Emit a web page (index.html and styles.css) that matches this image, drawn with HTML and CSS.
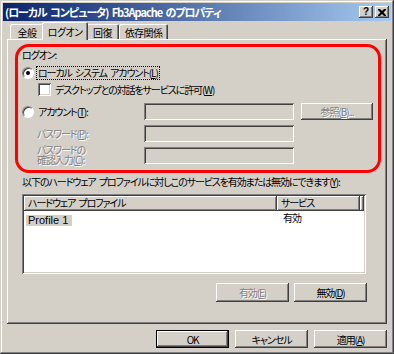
FILE: index.html
```html
<!DOCTYPE html>
<html lang="ja">
<head>
<meta charset="utf-8">
<title>プロパティ</title>
<link rel="stylesheet" href="styles.css">
</head>
<body>
<div class="window">
  <div class="titlebar">
    <span class="title">(ローカル コンピュータ) Fb3Apache のプロパティ</span>
    <div class="caption-btns">
      <span class="cbtn help">?</span>
      <span class="cbtn close"><svg width="8" height="7" viewBox="0 0 8 7"><path d="M0 0h2l2 2 2-2h2v1l-2.5 2.5 2.5 2.5v1h-2l-2-2-2 2h-2v-1l2.5-2.5-2.5-2.5z" fill="#000"/></svg></span>
    </div>
  </div>
  <div class="tabs">
    <div class="tab t1">全般</div>
    <div class="tab t2 sel">ログオン</div>
    <div class="tab t3">回復</div>
    <div class="tab t4">依存関係</div>
  </div>
  <div class="panel">
    <div class="annot"></div>
    <div class="lbl">ログオン:</div>
    <div class="opt-row r1"><span class="radio checked"></span><span class="focus">ローカル システム アカウント(<u>L</u>)</span></div>
    <div class="opt-row c1"><span class="check"></span><span class="otext">デスクトップとの対話をサービスに許可(<u>W</u>)</span></div>
    <div class="acct">
      <div class="opt-row"><span class="radio"></span><span class="otext">アカウント(<u>T</u>):</span></div>
      <div class="edit"></div>
      <div class="btn disabled">参照(<u>B</u>)...</div>
      <div class="dlabel">パスワード(<u>P</u>):</div>
      <div class="edit"></div>
      <div></div>
      <div class="dlabel two">パスワードの<br>確認入力(<u>C</u>):</div>
      <div class="edit"></div>
    </div>
    <div class="lbl hw">以下のハードウェア プロファイルに対しこのサービスを有効または無効にできます(<u>Y</u>):</div>
    <div class="listview">
      <div class="lv-head">
        <div class="hcell col1">ハードウェア プロファイル</div>
        <div class="hcell col2">サービス</div>
        <div class="hcell col3"></div>
      </div>
      <div class="lv-row">
        <div class="col1"><span class="selitem">Profile 1</span></div>
        <div class="col2 val">有効</div>
      </div>
    </div>
    <div class="btn-row">
      <div class="btn disabled">有効(<u>E</u>)</div>
      <div class="btn">無効(<u>D</u>)</div>
    </div>
  </div>
  <div class="dlg-btns">
    <div class="btn default">OK</div>
    <div class="btn">キャンセル</div>
    <div class="btn">適用(<u>A</u>)</div>
  </div>
</div>
</body>
</html>
```
FILE: styles.css
```css
* { box-sizing: border-box; }
html, body { margin: 0; padding: 0; background: #d4d0c8; }
body {
  font-family: "Noto Sans CJK JP", "Noto Sans", sans-serif;
  font-size: 10px;
  color: #000;
  font-feature-settings: "palt";
  letter-spacing: -1.1px;
  word-spacing: 2px;
}
u { text-decoration: underline; text-underline-offset: 1px; }

.window {
  width: 394px;
  height: 354px;
  padding: 3px;
  background: #d4d0c8;
  box-shadow: inset -1px -1px #404040, inset 1px 1px #d4d0c8, inset -2px -2px #808080, inset 2px 2px #fff;
  display: flex;
  flex-direction: column;
}

.titlebar {
  height: 18px;
  background: linear-gradient(to right, #0a246a, #a6caf0);
  display: flex;
  align-items: center;
  justify-content: space-between;
  padding: 0 2px 0 2px;
}
.title {
  color: #fff;
  font-weight: bold;
  font-size: 11px;
  letter-spacing: -1.05px;
  word-spacing: 2px;
  line-height: 18px;
}
.caption-btns { display: flex; gap: 2px; }
.cbtn {
  width: 14px;
  height: 12px;
  background: #d4d0c8;
  box-shadow: inset -1px -1px #404040, inset 1px 1px #fff, inset -2px -2px #808080;
  display: flex;
  align-items: center;
  justify-content: center;
  font-family: "Liberation Sans", sans-serif;
  font-weight: bold;
  font-size: 10px;
  line-height: 12px;
  letter-spacing: 0;
}

.tabs {
  display: flex;
  align-items: flex-end;
  height: 18px;
  padding-left: 7px;
  position: relative;
  z-index: 1;
}
.tab {
  height: 15px;
  background: #d4d0c8;
  border-radius: 2px 2px 0 0;
  box-shadow: inset 1px 1px #fff, inset -1px 0 #404040, inset -2px 0 #808080;
  display: flex;
  align-items: center;
  justify-content: center;
  line-height: 13px;
  padding-top: 1px;
  letter-spacing: -0.6px;
}
.t1 { width: 34px; }
.t2 { width: 42px; }
.t3 { width: 33px; }
.t4 { width: 49px; }
.tab.sel {
  height: 18px;
  width: 46px;
  margin: 0 -2px -1px -2px;
  padding-top: 0;
  position: relative;
}

.panel {
  margin-left: 4px;
  width: 380px;
  height: 285px;
  padding: 9px 0 0 15px;
  box-shadow: inset -1px -1px #404040, inset 1px 1px #fff, inset -2px -2px #808080;
  display: flex;
  flex-direction: column;
  position: relative;
}
.annot {
  position: absolute;
  left: 8px;
  top: 5px;
  width: 366px;
  height: 129px;
  border: 3px solid #ff0000;
  border-radius: 14px;
  pointer-events: none;
}
.lbl { height: 14px; line-height: 14px; white-space: nowrap; }
.opt-row {
  height: 14px;
  display: flex;
  align-items: center;
  white-space: nowrap;
}
.r1 { margin-top: 4px; }
.c1 { margin-top: 2px; padding-left: 16px; }
.radio {
  width: 12px;
  height: 12px;
  border-radius: 50%;
  background: #fff;
  border: 1px solid;
  border-color: #808080 #fff #fff #808080;
  box-shadow: inset 1px 1px #404040;
  margin-right: 3px;
  position: relative;
  flex: none;
}
.radio.checked::after {
  content: "";
  position: absolute;
  left: 3px;
  top: 3px;
  width: 4px;
  height: 4px;
  border-radius: 50%;
  background: #000;
}
.focus {
  outline: 1px dotted #000;
  outline-offset: 0;
  padding: 0 1px;
  line-height: 12px;
}
.otext { padding-left: 1px; }
.check {
  width: 13px;
  height: 13px;
  background: #fff;
  box-shadow: inset 1px 1px #808080, inset -1px -1px #fff, inset 2px 2px #404040, inset -2px -2px #d4d0c8;
  margin-right: 3px;
  flex: none;
}

.acct {
  margin-top: 7px;
  display: grid;
  grid-template-columns: 115px 150px 72px;
  grid-template-rows: 17px 17px 17px;
  column-gap: 7px;
  row-gap: 5px;
}
.acct .opt-row { height: 17px; }
.dlabel {
  padding-left: 15px;
  color: #808080;
  text-shadow: 1px 1px #fff;
  line-height: 17px;
  white-space: nowrap;
}
.dlabel.two { line-height: 10px; margin-top: -2px; }
.edit {
  background: #d4d0c8;
  box-shadow: inset 1px 1px #808080, inset -1px -1px #fff, inset 2px 2px #404040, inset -2px -2px #d4d0c8;
}
.acct .btn { height: 17px; }

.hw { margin-top: 11px; }
.listview {
  margin-top: 5px;
  width: 344px;
  height: 80px;
  background: #fff;
  padding: 2px;
  box-shadow: inset 1px 1px #808080, inset -1px -1px #fff, inset 2px 2px #404040, inset -2px -2px #d4d0c8;
}
.lv-head { display: flex; height: 15px; }
.hcell {
  background: #d4d0c8;
  box-shadow: inset -1px -1px #404040, inset 1px 1px #fff, inset -2px -2px #808080;
  line-height: 14px;
  padding-left: 4px;
  white-space: nowrap;
}
.col1 { width: 253px; }
.col2 { width: 83px; }
.col3 { flex: 1; }
.lv-row { display: flex; height: 13px; margin-top: 1px; }
.lv-row .col1 { padding-left: 2px; }
.selitem {
  display: inline-block;
  background: #d4d0c8;
  padding: 0 4px 0 2px;
  line-height: 11px;
  font-family: "Liberation Sans", sans-serif;
  font-size: 11px;
  letter-spacing: 0;
  word-spacing: 0;
}
.val { padding-left: 6px; line-height: 12px; }

.btn {
  height: 19px;
  background: #d4d0c8;
  box-shadow: inset -1px -1px #404040, inset 1px 1px #fff, inset -2px -2px #808080;
  display: flex;
  align-items: center;
  justify-content: center;
  white-space: nowrap;
}
.btn.disabled { color: #808080; text-shadow: 1px 1px #fff; }
.btn-row {
  margin-top: 9px;
  display: flex;
  gap: 5px;
  padding-left: 194px;
}
.btn-row .btn { width: 73px; }

.dlg-btns {
  margin-top: 6px;
  display: flex;
  gap: 6px;
  padding-left: 153px;
}
.dlg-btns .btn { width: 73px; height: 18px; }
.btn.default {
  border: 1px solid #000;
}
```
